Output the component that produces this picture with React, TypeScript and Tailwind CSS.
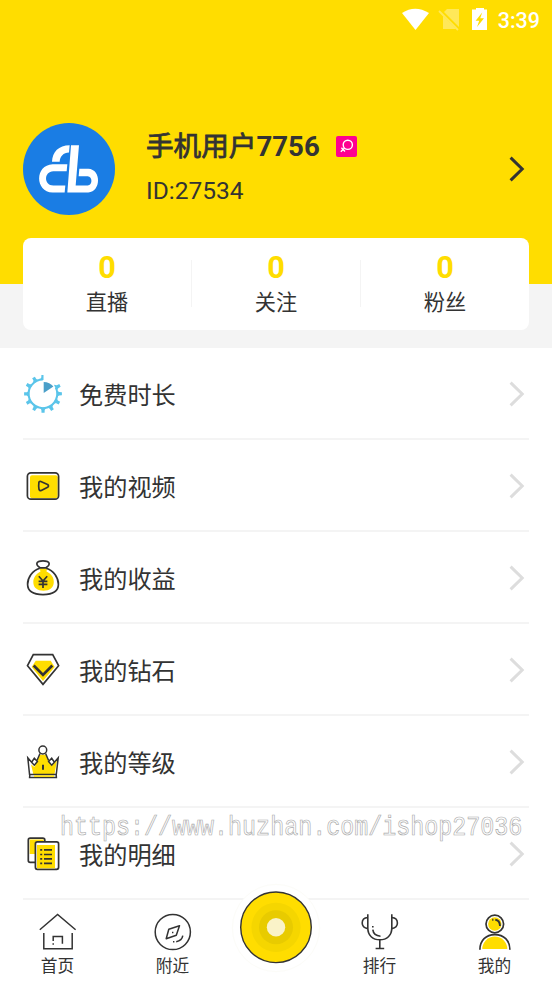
import type { ReactNode } from "react";

const INK = "#333333";
const SUN = "#ffdd00";

function Glyph({ children }: { children: ReactNode }) {
  return (
    <svg
      viewBox="0 0 40 40"
      className="size-10 shrink-0"
      fill="none"
      stroke={INK}
      strokeWidth="1.7"
      strokeLinejoin="round"
    >
      {children}
    </svg>
  );
}

function TimerIcon() {
  const teeth = [0, 64, 90, 120, 150, 180, 210, 240, 270, 300, 330];
  return (
    <Glyph>
      <g stroke="#5bc5ea">
        <path d="M32.8 13.6A14.3 14.3 0 1 1 19.8 5.5" strokeWidth="2" />
        {teeth.map((a) => (
          <path
            key={a}
            d="M16.6 6L18.3 3.6L18.4 0.9H21.5L21.6 3.6L23 6Z"
            fill="#5bc5ea"
            stroke="none"
            transform={`rotate(${a} 20 19.8)`}
          />
        ))}
      </g>
      <path d="M20.5 6.4L24 6.4V0H20.5Z" fill="#ffffff" stroke="none" />
      <path d="M20.7 8V19L30.4 12.6C28.2 9.8 24.6 8 20.7 8Z" fill="#4a9fc9" stroke="none" />
    </Glyph>
  );
}

function VideoIcon() {
  return (
    <Glyph>
      <rect x="7" y="9.3" width="27.7" height="23" rx="2" fill={SUN} stroke="none" />
      <rect x="4.4" y="6.8" width="31.2" height="26.4" rx="3.5" />
      <path d="M15.9 16.3Q16.3 15 17.8 15.5L24.6 18.5Q26.4 20 24.6 21.3L18.3 24.4Q16.4 25 16 23.3Q15.4 19.5 15.9 16.3Z" />
    </Glyph>
  );
}

function BagIcon() {
  return (
    <Glyph>
      <path
        d="M16.5 10.3H24L23.5 13.5C28.5 16 30.8 19.5 30.8 24C30.8 29.7 26.6 32.7 20.5 32.7C14.6 32.7 10.3 30 10.3 24C10.3 19.5 13 15.8 17.5 13.4Z"
        fill={SUN}
        stroke="none"
      />
      <path d="M17 9.8C14.8 8.2 13.5 6.8 13.9 5.2C14.4 3.4 17 2.8 20 2.8S25.6 3.4 26.1 5.2C26.5 6.8 25.2 8.2 23 9.8Z" />
      <path d="M16.8 10.3C9.5 12.5 4.6 19.5 4.6 26.3C4.6 33.5 11 36.6 20 36.6S35.4 33.5 35.4 26.3C35.4 19.5 30.5 12.5 23.2 10.3" />
      <path d="M15.8 18.2L20 23L24.2 18.2M20 23V30M15.6 23.4H24.4M15.6 26.4H24.4" strokeWidth="1.7" />
    </Glyph>
  );
}

function DiamondIcon() {
  return (
    <Glyph>
      <path d="M12.7 10.7H27.7L31.7 17L20 31L8.7 17Z" fill={SUN} stroke="none" />
      <path d="M10.3 4.6H29.7L35.6 15.7L20 34.4L4.5 15.7Z" strokeLinejoin="miter" />
      <path d="M10.7 15.5L20 24.9L29.3 15.5" strokeWidth="2.7" strokeLinejoin="miter" />
    </Glyph>
  );
}

function CrownIcon() {
  return (
    <Glyph>
      <path
        d="M17 12.8H23L28.5 24L34 18.5L31 35H11L8 22.5L11.5 25Z"
        fill={SUN}
        stroke="none"
      />
      <g strokeWidth="1.5" strokeLinejoin="miter">
        <circle cx="19.8" cy="8" r="3.9" fill="#ffffff" />
        <path d="M17 11.5L14 18.5M22.6 11.5L25.6 18.5" />
        <path d="M6.6 33L4.8 15.8L8.6 20.2L11.3 16.3L14.4 19.6L11.3 23.2L8.6 20.2M33.2 33L35.2 15.8L31.4 20.2L28.7 16.3L25.6 19.6L28.7 23.2L31.4 20.2" />
        <path d="M6.8 32.6H33.2L33.4 35.5H6.6Z" fill="#ffffff" />
      </g>
      <path d="M11 34.1H31" stroke={SUN} strokeWidth="1.6" />
      <path d="M20 22.8V27.8" strokeWidth="2" />
    </Glyph>
  );
}

function ListIcon() {
  return (
    <Glyph>
      <rect x="6.7" y="5.5" width="14" height="14.5" fill={SUN} stroke="none" />
      <path d="M12 28.4H7.2Q5.3 28.4 5.3 26.5V6Q5.3 4.2 7.2 4.2H19.8Q21.8 4.2 21.8 6V7" />
      <rect x="12.4" y="7.9" width="23.2" height="27.4" rx="2" fill="#ffffff" />
      <rect x="14" y="11" width="18" height="23.3" fill={SUN} stroke="none" />
      <path d="M17.2 15.8H19.2M17.2 20.5H19.2M17.2 24.9H19.2M17.2 29.3H19.2M21 15.8H29M21 20.5H29M21 24.9H29M21 29.3H29" />
    </Glyph>
  );
}

function HomeIcon() {
  return (
    <Glyph>
      <g strokeWidth="1.5" strokeLinejoin="miter">
        <path d="M1.8 18.7L19.6 3.5L37.6 18.7" />
        <path d="M5.8 22V37.8H34.2V22" />
        <path d="M15.2 30V25.4H24.4V32.7M15.2 32.3V33.8" />
      </g>
    </Glyph>
  );
}

function CompassIcon() {
  return (
    <Glyph>
      <g strokeWidth="1.5">
        <circle cx="19.8" cy="21" r="17.6" />
        <path d="M26.5 14.7L15.8 18.2L13.2 27.7L23.3 24.2Z" />
        <path d="M29.8 24.7Q29 29.7 23.2 30.8M20 30.8H21.4M19 21.4H20.4" />
      </g>
    </Glyph>
  );
}

function TrophyIcon() {
  return (
    <Glyph>
      <g strokeWidth="1.6">
        <path d="M7.8 3.2V17C7.8 24.5 12.8 28.8 19.8 28.8S31.8 24.5 31.8 17V3.2" />
        <path d="M19.8 28.8V37.5M15.6 37.5H24.2" />
        <path d="M7.8 6.5C4 6.8 2.2 9 2.2 12S4 17 7.8 17.6M31.8 6.5C35.6 6.8 37.4 9 37.4 12S35.6 17 31.8 17.6" />
        <path d="M12.8 18.7C13.3 22.6 16 25 20.5 25.2M12.8 15.1V16.4" />
      </g>
    </Glyph>
  );
}

function PersonIcon() {
  return (
    <Glyph>
      <circle cx="19.8" cy="13" r="6.7" fill={SUN} stroke="none" />
      <circle cx="19.8" cy="13" r="8.8" />
      <path d="M7.3 38A12.5 12.5 0 0 1 32.3 38Z" fill={SUN} stroke="none" />
      <path d="M4.9 38.7C4.9 29.5 11 23.6 19.9 23.6S34.9 29.5 34.9 38.7" />
      <path d="M20.3 8.8Q24.8 9.3 25 15M17.2 8.8H18.4" strokeWidth="1.9" />
    </Glyph>
  );
}

function Chevron({ color }: { color: string }) {
  return (
    <svg viewBox="0 0 20 28" className="h-7 w-5 shrink-0" fill="none" stroke={color} strokeWidth="3">
      <path d="M1.6 2.6L13.2 14L1.6 25.4" />
    </svg>
  );
}

function Avatar() {
  return (
    <svg viewBox="39 37.5 276 276" className="size-[92px] shrink-0">
      <circle cx="177" cy="175.5" r="138" fill="#1a7de4" />
      <g fill="#ffffff">
        <path d="M126 154C127 124 146 104 179 104L177 126C160 127 150 137 149 154Z" />
        <path d="M183 104H207L197 225H233C248 224 248 198 233 197H206L208 175H235C274 177 274 243 235 246H172Z" />
        <path d="M172 161H128C74 163 74 244 128 246H164L166 225H130C101 224 101 183 130 182H170Z" />
      </g>
    </svg>
  );
}

const stats = ["直播", "关注", "粉丝"];

const menu = [
  { label: "免费时长", icon: <TimerIcon /> },
  { label: "我的视频", icon: <VideoIcon /> },
  { label: "我的收益", icon: <BagIcon /> },
  { label: "我的钻石", icon: <DiamondIcon /> },
  { label: "我的等级", icon: <CrownIcon /> },
  { label: "我的明细", icon: <ListIcon /> },
];

function Tab({ label, children }: { label: string; children: ReactNode }) {
  return (
    <div className="flex flex-1 flex-col items-center pt-[11px]">
      {children}
      <span className="mt-1 text-[16.7px] leading-6">{label}</span>
    </div>
  );
}

export default function App() {
  return (
    <div className="relative flex h-[981px] w-[552px] flex-col overflow-hidden bg-white font-[Roboto,'Noto_Sans_CJK_SC',sans-serif] text-[#333333]">
      <header className="h-[283.6px] shrink-0 bg-[#ffdd00]">
        <div className="flex h-10 items-center justify-end pr-3 text-white">
          <svg viewBox="0 0 90 40" className="h-10 w-[90px]">
            <path d="M2 13Q15 4.5 29 13L15.5 30Z" fill="#ffffff" />
            <g opacity="0.35">
              <path d="M47 9H59V27L44 12Z" fill="#ffffff" />
              <path d="M43 16L56 29H43Z" fill="#ffffff" />
              <path d="M39 11L58 30" stroke="#ffffff" strokeWidth="1.8" />
            </g>
            <path d="M72 9.5H76V8H84V9.5H87V30H72Z" fill="#ffffff" />
            <path d="M82.2 12.5L75.6 20.8H79.2L77 27L84 18.2H80.2Z" fill="#ffdd00" />
          </svg>
          <span className="mt-px ml-2 text-[21.5px] leading-none font-medium">3:39</span>
        </div>
        <div className="mt-[82.6px] flex h-[92px] items-center pr-[23px] pl-[23px]">
          <Avatar />
          <div className="ml-[31px] flex flex-1 flex-col">
            <div className="flex h-11 items-center">
              <span className="text-[27.6px] leading-none">
                <span className="[-webkit-text-stroke:0.8px_#333333]">手机用户</span>
                <span className="font-bold">7756</span>
              </span>
              <svg viewBox="0 0 21 21" className="ml-4 size-[21px]" fill="none" stroke="#ffffff" strokeWidth="1.4">
                <rect width="21" height="21" rx="2" fill="#ff0090" stroke="none" />
                <circle cx="11.8" cy="8.8" r="4.6" />
                <path d="M8.6 12L4.8 15.8M5.4 11.8L9 15.6" />
              </svg>
            </div>
            <div className="flex h-11 items-center pt-[2px] text-[24.5px] leading-none">ID:27534</div>
          </div>
          <Chevron color={INK} />
        </div>
      </header>

      <section className="h-[64.4px] shrink-0 bg-[#f4f4f4] px-[23px]">
        <div className="relative -mt-[46px] flex h-[92px] items-center rounded-lg bg-white">
          {stats.map((label, i) => (
            <div
              key={label}
              className={`flex h-[47px] flex-1 flex-col items-center justify-center ${i > 0 ? "border-l border-[#f4f4f4]" : ""}`}
            >
              <span className="text-[30.7px] leading-9 font-bold text-[#ffdd00]">0</span>
              <span className="mt-px -mb-px text-[21.2px] leading-8">{label}</span>
            </div>
          ))}
        </div>
      </section>

      <main className="shrink-0 px-[23px]">
        {menu.map((item) => (
          <div key={item.label} className="flex h-[92px] items-center border-b-2 border-[#f4f4f4] pt-[2px]">
            {item.icon}
            <span className="ml-4 flex-1 pt-[5px] text-[24.2px] leading-9">{item.label}</span>
            <Chevron color="#dddddd" />
          </div>
        ))}
      </main>

      <div className="pointer-events-none absolute top-[813px] left-[60px] h-[30px]">
        <span className="block origin-top scale-y-[1.15] font-['Liberation_Mono',monospace] text-[23.35px] leading-[26px] whitespace-nowrap text-white [-webkit-text-stroke:0.6px_#aaaaaa]">
          https://www.huzhan.com/ishop27036
        </span>
      </div>

      <nav className="flex flex-1">
        <Tab label="首页">
          <HomeIcon />
        </Tab>
        <Tab label="附近">
          <CompassIcon />
        </Tab>
        <div className="relative z-10 -mt-[18px] w-[92px]">
          <svg viewBox="0 0 92 92" className="size-[92px]">
            <circle cx="46" cy="46" r="43.6" fill="#ffffff" stroke="#fcfcf8" strokeWidth="1" />
            <circle cx="46" cy="45.3" r="35.3" fill={SUN} stroke={INK} strokeWidth="1.4" />
            <circle cx="46" cy="45.3" r="24.6" fill="#f5d600" />
            <circle cx="46" cy="45.3" r="17" fill="#e8cb00" />
            <circle cx="46" cy="45.3" r="9.2" fill="#faf3c8" />
          </svg>
        </div>
        <Tab label="排行">
          <TrophyIcon />
        </Tab>
        <Tab label="我的">
          <PersonIcon />
        </Tab>
      </nav>
    </div>
  );
}
